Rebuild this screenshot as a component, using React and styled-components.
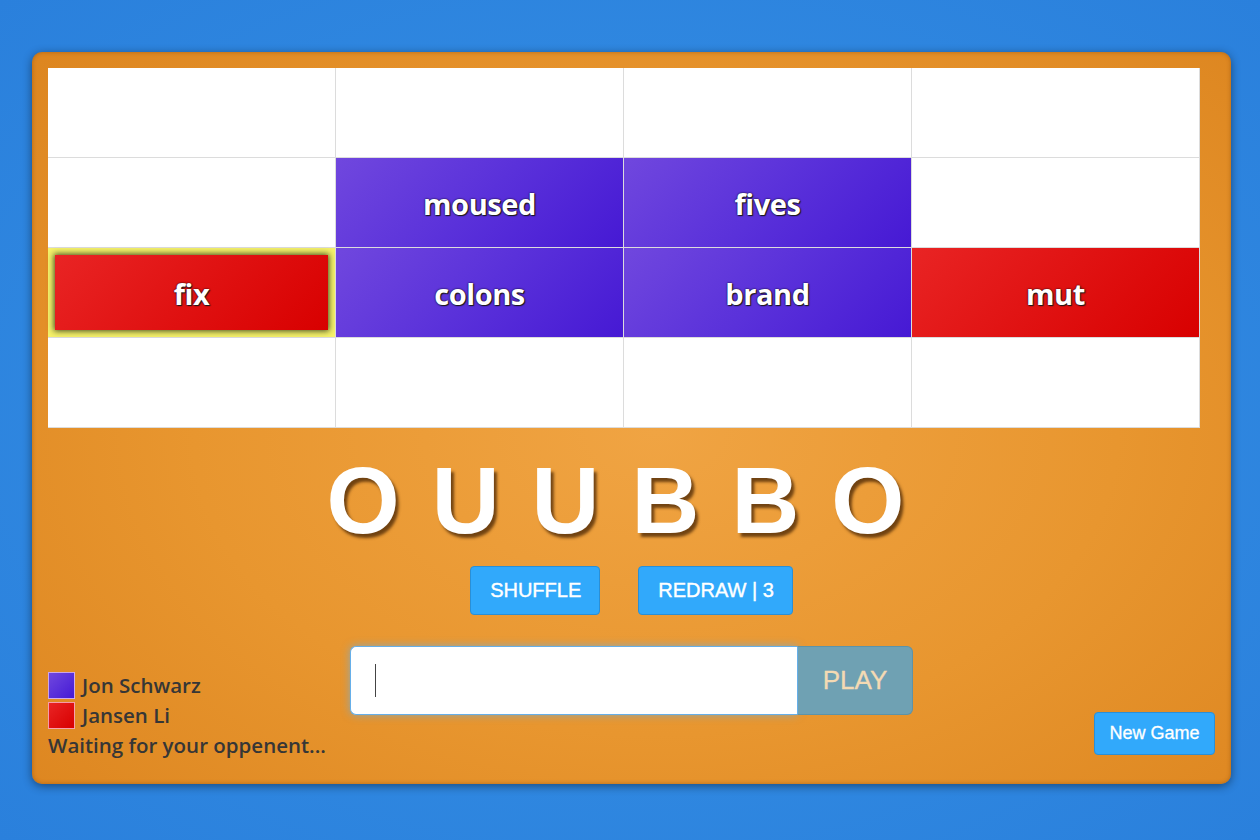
import React, { useState } from "react";
import styled, { createGlobalStyle, css } from "styled-components";

const GlobalStyle = createGlobalStyle`
  html, body {
    margin: 0;
    padding: 0;
  }
  body {
    font-family: "Open Sans", "Liberation Sans", sans-serif;
    background: radial-gradient(ellipse at 50% 50%, #3b92e9 0%, #2f87e0 60%, #2a80dc 100%);
    min-height: 840px;
  }
`;

const board = [
  [null, null, null, null],
  [null, { word: "moused", owner: "blue" }, { word: "fives", owner: "blue" }, null],
  [
    { word: "fix", owner: "red", selected: true },
    { word: "colons", owner: "blue" },
    { word: "brand", owner: "blue" },
    { word: "mut", owner: "red" },
  ],
  [null, null, null, null],
];

const letters = ["O", "U", "U", "B", "B", "O"];

const players = [
  { name: "Jon Schwarz", owner: "blue" },
  { name: "Jansen Li", owner: "red" },
];

const fills = {
  blue: "linear-gradient(135deg, #7047de 0%, #5a31da 50%, #4619d4 100%)",
  red: "linear-gradient(135deg, #e92424 0%, #e01212 50%, #d80000 100%)",
};

export default function App() {
  const [guess, setGuess] = useState("");

  return (
    <>
      <GlobalStyle />
      <Page>
        <Panel>
          <Board>
            {board.map((row, r) =>
              row.map((cell, c) => (
                <Cell
                  key={`${r}-${c}`}
                  $owner={cell && cell.owner}
                  $selected={cell && cell.selected}
                >
                  {cell && (
                    <Tile $owner={cell.owner} $selected={cell.selected}>
                      {cell.word}
                    </Tile>
                  )}
                </Cell>
              ))
            )}
          </Board>

          <Letters>
            {letters.map((l, i) => (
              <Letter key={i}>{l}</Letter>
            ))}
          </Letters>

          <Actions>
            <ActionButton>SHUFFLE</ActionButton>
            <ActionButton>REDRAW | 3</ActionButton>
          </Actions>

          <Footer>
            <Players>
              {players.map((p) => (
                <PlayerRow key={p.name}>
                  <Swatch $owner={p.owner} />
                  {p.name}
                </PlayerRow>
              ))}
              <Status>Waiting for your oppenent...</Status>
            </Players>

            <GuessForm onSubmit={(e) => e.preventDefault()}>
              <GuessInput
                autoFocus
                $empty={guess === ""}
                value={guess}
                onChange={(e) => setGuess(e.target.value)}
              />
              <PlayButton type="submit">PLAY</PlayButton>
            </GuessForm>

            <NewGameCell>
              <NewGameButton>New Game</NewGameButton>
            </NewGameCell>
          </Footer>
        </Panel>
      </Page>
    </>
  );
}

const Page = styled.div`
  padding: 52px 0 0 32px;
  height: 840px;
  box-sizing: border-box;
`;

const Panel = styled.div`
  width: 1199px;
  box-sizing: border-box;
  padding: 16px 16px 24px 16px;
  border-radius: 10px;
  background: radial-gradient(ellipse 70% 75% at 52% 52%, #f0a443 0%, #e8962f 55%, #dd8620 100%);
  box-shadow: 0 2px 10px rgba(0, 0, 0, 0.45), inset 0 0 4px rgba(120, 60, 0, 0.45);
`;

const Board = styled.div`
  width: 1152px;
  display: grid;
  grid-template-columns: repeat(4, 288px);
  grid-template-rows: repeat(4, 90px);
  background: #fff;
`;

const Cell = styled.div`
  box-sizing: border-box;
  border-right: 1px solid #dcdcdc;
  border-bottom: 1px solid #dcdcdc;
  display: flex;
  background: ${({ $owner }) => ($owner ? fills[$owner] : "#fff")};
  ${({ $selected }) =>
    $selected &&
    css`
      background: #f6f26a;
      padding: 7px 7px 7px 7px;
    `}
`;

const Tile = styled.div`
  flex: 1;
  display: flex;
  align-items: center;
  justify-content: center;
  color: #fff;
  font-family: "Open Sans", "Liberation Sans", sans-serif;
  font-weight: 700;
  font-size: 29px;
  letter-spacing: -0.4px;
  padding-top: 2px;
  text-shadow: 1px 1px 1px #1a1a1a, 0 0 2px #000;
  background: ${({ $owner }) => fills[$owner]};
  ${({ $selected }) =>
    $selected &&
    css`
      box-shadow: 0 0 6px 1px rgba(30, 40, 20, 0.85);
    `}
`;

const Letters = styled.div`
  display: flex;
  justify-content: center;
  gap: 32px;
  margin-top: 25px;
  padding-right: 32px;
`;

const Letter = styled.span`
  font-family: "Liberation Sans", Arial, sans-serif;
  font-weight: 700;
  font-size: 94px;
  line-height: 96px;
  color: #fff;
  text-shadow: 3px 4px 3px rgba(90, 50, 10, 0.85);
`;

const Actions = styled.div`
  display: flex;
  justify-content: center;
  gap: 38px;
  margin-top: 17px;
`;

const ActionButton = styled.button`
  height: 49px;
  padding: 0 18px 0 19px;
  border: 1px solid #2a8fd6;
  border-radius: 4px;
  background: #31a9fb;
  color: #fff;
  font-family: "Liberation Sans", Arial, sans-serif;
  font-size: 20px;
  -webkit-text-stroke: 0.4px #fff;
  cursor: pointer;
`;

const Footer = styled.div`
  display: grid;
  grid-template-columns: 1fr auto 1fr;
  margin-top: 31px;
`;

const Players = styled.div`
  padding-top: 24px;
  display: flex;
  flex-direction: column;
`;

const PlayerRow = styled.div`
  display: flex;
  align-items: center;
  gap: 7px;
  height: 30px;
  font-size: 20.5px;
  font-weight: 600;
  color: #363636;
`;

const Swatch = styled.span`
  width: 25px;
  height: 25px;
  border: 1px solid rgba(255, 220, 240, 0.7);
  background: ${({ $owner }) => fills[$owner]};
`;

const Status = styled.div`
  height: 30px;
  line-height: 30px;
  font-size: 20.5px;
  font-weight: 600;
  color: #363636;
`;

const GuessForm = styled.form`
  display: flex;
  align-self: start;
  margin: 0;
`;

const GuessInput = styled.input`
  width: 447px;
  height: 69px;
  box-sizing: border-box;
  padding: 0 24px;
  border: 1px solid #66afe9;
  border-right: none;
  border-radius: 6px 0 0 6px;
  font-family: "Liberation Sans", Arial, sans-serif;
  font-size: 26px;
  color: #333;
  outline: none;
  box-shadow: 0 0 8px rgba(102, 175, 233, 0.7);
  caret-color: #333;
  background: ${({ $empty }) =>
    $empty
      ? "#fff linear-gradient(#444, #444) no-repeat 24px 50% / 1px 33px"
      : "#fff"};
`;

const PlayButton = styled.button`
  width: 116px;
  height: 69px;
  border: 1px solid #5d93a8;
  border-left: 1px solid #66afe9;
  border-radius: 0 6px 6px 0;
  background: #6fa1b3;
  color: #f4dab3;
  font-family: "Liberation Sans", Arial, sans-serif;
  font-size: 26px;
  -webkit-text-stroke: 0.3px #f4dab3;
  cursor: pointer;
`;

const NewGameCell = styled.div`
  display: flex;
  justify-content: flex-end;
  align-items: flex-end;
  padding-bottom: 5px;
`;

const NewGameButton = styled.button`
  width: 121px;
  height: 43px;
  border: 1px solid #2a8fd6;
  border-radius: 4px;
  background: #31a9fb;
  color: #fff;
  font-family: "Liberation Sans", Arial, sans-serif;
  font-size: 18px;
  -webkit-text-stroke: 0.3px #fff;
  cursor: pointer;
`;
